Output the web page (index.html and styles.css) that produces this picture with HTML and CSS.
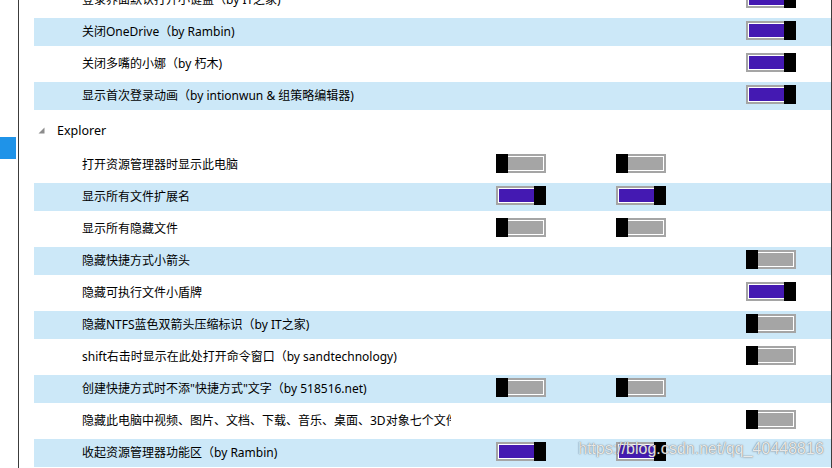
FILE: index.html
```html
<!DOCTYPE html>
<html>
<head>
<meta charset="utf-8">
<title>Tweaks</title>
<link rel="stylesheet" href="styles.css">
</head>
<body>
<div class="window">
    <div class="rail">
        <div class="rail-marker"></div>
    </div>
    <div class="panel">
        <div class="list">
            <div class="row">
                <span class="label">登录界面默认打开小键盘（by IT之家)</span>
                <span></span><span></span>
                <span class="toggle on"><i class="thumb"></i></span>
            </div>
            <div class="row alt">
                <span class="label">关闭OneDrive（by Rambin)</span>
                <span></span><span></span>
                <span class="toggle on"><i class="thumb"></i></span>
            </div>
            <div class="row">
                <span class="label">关闭多嘴的小娜（by 朽木)</span>
                <span></span><span></span>
                <span class="toggle on"><i class="thumb"></i></span>
            </div>
            <div class="row alt">
                <span class="label">显示首次登录动画（by intionwun &amp; 组策略编辑器)</span>
                <span></span><span></span>
                <span class="toggle on"><i class="thumb"></i></span>
            </div>

            <div class="group">
                <svg class="arrow" width="7" height="7" viewBox="0 0 7 7"><polygon points="6.5,0.5 6.5,6.5 0.5,6.5" fill="#8c8c8c"/></svg>
                <span>Explorer</span>
            </div>

            <div class="row">
                <span class="label">打开资源管理器时显示此电脑</span>
                <span class="toggle"><i class="thumb"></i></span>
                <span class="toggle"><i class="thumb"></i></span>
                <span></span>
            </div>
            <div class="row alt">
                <span class="label">显示所有文件扩展名</span>
                <span class="toggle on"><i class="thumb"></i></span>
                <span class="toggle on"><i class="thumb"></i></span>
                <span></span>
            </div>
            <div class="row">
                <span class="label">显示所有隐藏文件</span>
                <span class="toggle"><i class="thumb"></i></span>
                <span class="toggle"><i class="thumb"></i></span>
                <span></span>
            </div>
            <div class="row alt">
                <span class="label">隐藏快捷方式小箭头</span>
                <span></span><span></span>
                <span class="toggle"><i class="thumb"></i></span>
            </div>
            <div class="row">
                <span class="label">隐藏可执行文件小盾牌</span>
                <span></span><span></span>
                <span class="toggle on"><i class="thumb"></i></span>
            </div>
            <div class="row alt">
                <span class="label">隐藏NTFS蓝色双箭头压缩标识（by IT之家)</span>
                <span></span><span></span>
                <span class="toggle"><i class="thumb"></i></span>
            </div>
            <div class="row">
                <span class="label">shift右击时显示在此处打开命令窗口（by sandtechnology)</span>
                <span></span><span></span>
                <span class="toggle"><i class="thumb"></i></span>
            </div>
            <div class="row alt">
                <span class="label">创建快捷方式时不添"快捷方式"文字（by 518516.net)</span>
                <span class="toggle"><i class="thumb"></i></span>
                <span class="toggle"><i class="thumb"></i></span>
                <span></span>
            </div>
            <div class="row">
                <span class="label">隐藏此电脑中视频、图片、文档、下载、音乐、桌面、3D对象七个文件夹</span>
                <span></span><span></span>
                <span class="toggle"><i class="thumb"></i></span>
            </div>
            <div class="row alt">
                <span class="label">收起资源管理器功能区（by Rambin)</span>
                <span class="toggle on"><i class="thumb"></i></span>
                <span class="toggle on"><i class="thumb"></i></span>
                <span></span>
            </div>
        </div>
    </div>
    <div class="watermark">https://blog.csdn.net/qq_40448816</div>
</div>
</body>
</html>
```

FILE: styles.css
```css
html, body {
    margin: 0;
    padding: 0;
    height: 100%;
    overflow: hidden;
    background-color: white;
}

body {
    font-family: "Noto Sans", "Noto Sans CJK SC", sans-serif;
    font-size: 12px;
    color: #000;
}

.window {
    position: relative;
    display: flex;
    height: 468px;
    width: 832px;
}

.rail {
    width: 18px;
    flex: none;
}

.rail-marker {
    margin-top: 137px;
    width: 16px;
    height: 22px;
    background-color: #1f93e8;
}

.panel {
    flex: 1;
    border-left: 1px solid #3c3c3c;
    border-right: 1px solid #3c3c3c;
    overflow: hidden;
}

.list {
    display: flex;
    flex-direction: column;
    gap: 4px;
    margin-top: -14px;
    margin-left: 15px;
}

.row {
    display: grid;
    grid-template-columns: 462px 120px 130px 1fr;
    align-items: start;
    height: 28px;
    line-height: 28px;
}

.row.alt {
    background-color: #cce8f8;
}

.label {
    width: 369px;
    padding-left: 48px;
    white-space: nowrap;
    overflow: hidden;
}

.group {
    display: flex;
    align-items: center;
    height: 33px;
    padding-left: 4px;
    font-size: 12.5px;
}

.arrow {
    margin-right: 12px;
    margin-top: -1px;
}

/* switch: grey frame, white inner line, black knob */
.toggle {
    position: relative;
    box-sizing: border-box;
    width: 50px;
    height: 19px;
    margin-top: 3px;
    border: 2px solid #a5a5a5;
    background-color: #a5a5a5;
    box-shadow: inset 0 0 0 1px #fff;
}

.toggle.on {
    background-color: #4419b2;
}

.thumb {
    position: absolute;
    top: -2px;
    bottom: -2px;
    left: -2px;
    width: 12px;
    background-color: #000;
}

.toggle.on .thumb {
    left: auto;
    right: -2px;
}

.watermark {
    position: absolute;
    left: 578px;
    top: 440px;
    font-family: "Liberation Sans", Arial, sans-serif;
    font-size: 16px;
    line-height: 18px;
    color: rgba(255, 255, 255, 0.85);
    text-shadow: 0 0 1px rgba(60, 60, 60, 0.75), 0 0 2px rgba(90, 90, 90, 0.35);
    white-space: nowrap;
}
```
